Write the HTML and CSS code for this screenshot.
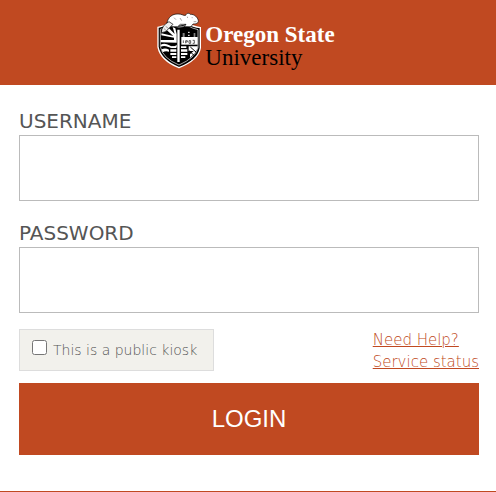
FILE: index.html
```html
<!DOCTYPE html>
<html lang="en">
<head>
<meta charset="utf-8">
<meta name="viewport" content="width=device-width, initial-scale=1">
<title>Login</title>
<link rel="stylesheet" href="styles.css">
</head>
<body>
<header class="banner">
  <svg class="crest" viewBox="21 21 138 174" aria-hidden="true">
    <path d="M24 67 Q48 62 64 52 Q87 67 110 53 Q129 66 151 68 L151 129 Q145 165 87 188 Q32 166 24 126Z" fill="#000" stroke="#fff" stroke-width="4"/>
    <path d="M31 73 Q47 69 64 59 Q87 73 109 60 Q128 71 144 74 L144 128 Q137 158 87 180 Q38 160 31 125Z" fill="none" stroke="#fff" stroke-width="2"/>
    <path d="M32 105L72 105 72 98 34 91 34 85 70 93 49 74 57 70 74 87 68 66 76 70 80 88 80 113 32 112Z" fill="#fff"/>
    <path d="M32 119Q45 113 58 121T80 119V126Q67 132 55 126T32 125Z M35 133Q46 128 57 134L57 140Q47 136 38 142Z" fill="#fff"/>
    <path d="M94 96H143V119H94Z" fill="#fff"/>
    <path d="M98 87H104M98 93H104M114 82H119M114 91H119M131 87H136M131 93H136" stroke="#fff" stroke-width="3"/>
    <path d="M100 106V114M107 115V107H112V111H107M117 107H122V115H117ZM128 106H133V115H128" fill="none" stroke="#111" stroke-width="2"/>
    <path d="M82 74H89V171H82ZM64 124H79V129H64ZM61 133H79V140H61ZM61 144H79V150H61ZM66 154H79V159H66ZM93 124H109V129H93ZM93 133H112V140H93ZM93 144H112V150H93ZM93 154H106V159H93Z" fill="#fff"/>
    <path d="M116 124H143V129L135 144 120 158V148L131 138H116Z" fill="#fff"/>
    <path d="M121 126L139 142M117 137L132 151" stroke="#000" stroke-width="3"/>
    <path d="M51 54C54 37 67 26 84 27C94 26 101 33 107 31C110 23 118 24 121 28C133 27 143 37 145 47C146 54 139 57 129 57L123 65H103L108 58H91L83 65H62L65 59Z" fill="#fff" stroke="#000" stroke-width="2"/>
    <path d="M57 50Q35 61 34 83Q47 84 57 70L69 58Z" fill="#eee" stroke="#000" stroke-width="2"/>
    <path d="M42 71L49 77M47 64L55 70M72 38L78 44M90 39L95 47M112 35L113 39M125 38H128M131 50H139" fill="none" stroke="#777" stroke-width="2"/>
  </svg>
  <div class="wordmark"><strong>Oregon State</strong><span>University</span></div>
</header>
<main>
  <form class="login">
    <label class="field-label" for="username">USERNAME</label>
    <input class="field" id="username" type="text" autocomplete="username">
    <label class="field-label" for="password">PASSWORD</label>
    <input class="field" id="password" type="password" autocomplete="current-password">
    <div class="options">
      <label class="kiosk" for="kiosk"><input id="kiosk" type="checkbox"><span>This is a public kiosk</span></label>
      <nav class="links"><a href="#help">Need Help?</a><a href="#status">Service status</a></nav>
    </div>
    <button class="submit" type="submit">LOGIN</button>
  </form>
</main>
<footer class="footer"></footer>
</body>
</html>
```
FILE: styles.css
```css
* { box-sizing: border-box; }
body {
  margin: 0;
  background: #fff;
  color: #555;
  font-family: "DejaVu Sans", sans-serif;
}
.banner {
  display: flex;
  justify-content: center;
  gap: 2px;
  padding: 12px 4px 15px 0;
  background: #c04921;
}
.crest { width: 46px; height: 58px; }
.wordmark {
  display: flex;
  flex-direction: column;
  padding-top: 11px;
  color: #000;
  font: 23px/23px "Liberation Serif", serif;
}
.wordmark strong { color: #fff; }
.login {
  display: flex;
  flex-direction: column;
  padding: 22px 17px 36px 19px;
}
.field-label { font-size: 20px; line-height: 28px; }
.field {
  width: 100%;
  height: 66px;
  margin-bottom: 18px;
  padding: 0 16px;
  border: 1px solid #bbb;
  font: inherit;
  font-size: 20px;
}
.options {
  display: flex;
  justify-content: space-between;
  align-items: flex-start;
  margin: -2px 0 10px;
  font-size: 15px;
  font-weight: 200;
  line-height: 22px;
}
.kiosk {
  display: flex;
  align-items: center;
  gap: 6px;
  height: 42px;
  padding: 0 16px 0 12px;
  border: 1px solid #ddd;
  background: #f2f1ec;
  font-size: 14px;
}
.kiosk input { width: 15px; height: 15px; margin: 0 0 6px; }
.links { display: flex; flex-direction: column; }
.links a { color: #c04921; }
.submit {
  height: 72px;
  border: 0;
  background: #c04921;
  color: #fff;
  font: 24px "Liberation Sans", sans-serif;
}
.footer { border-top: 1px solid #c04921; }
```
